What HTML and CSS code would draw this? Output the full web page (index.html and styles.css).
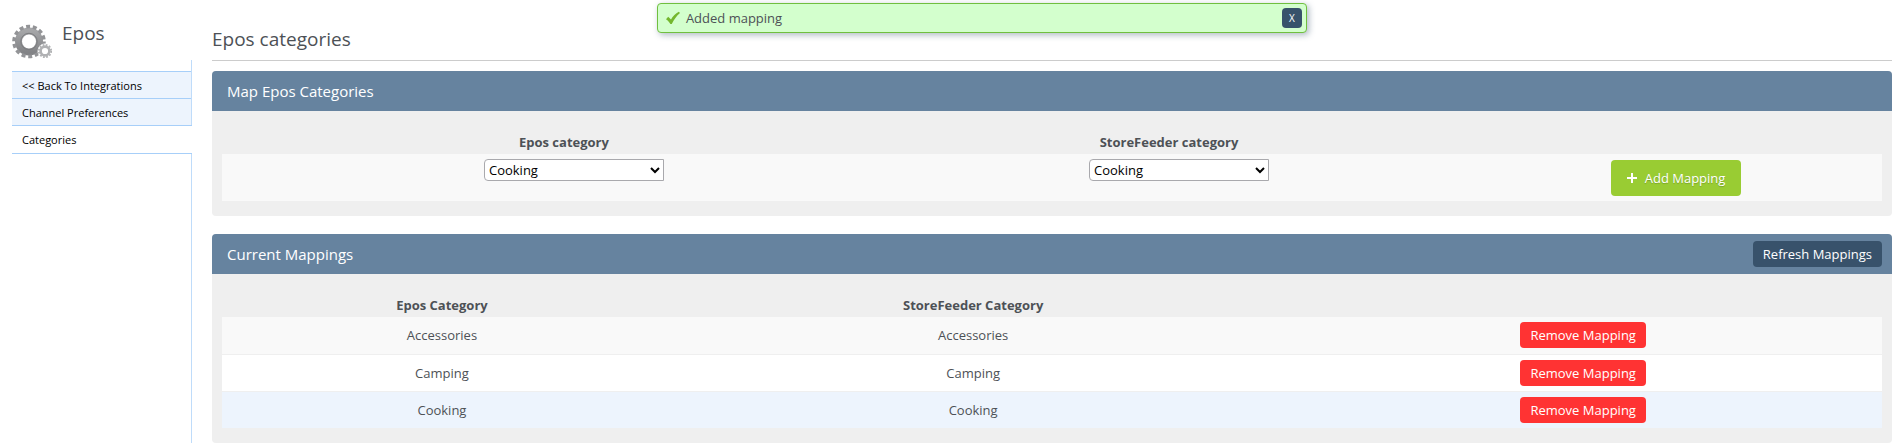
FILE: index.html
```
<!DOCTYPE html>
<html lang="en">
<head>
    <meta charset="UTF-8">
    <meta name="viewport" content="width=device-width, initial-scale=1.0">
    <title>Epos categories</title>
    <link rel="stylesheet" href="styles.css">
</head>
<body>
<div class="notification" role="status">
    <svg class="notification-icon" width="16" height="14" viewBox="0 0 16 14" aria-hidden="true">
        <path d="M1 8.2 3.2 5.8 6 8.4C8 5 10.500 2.600 13.800 .8L15 2C11.500 5 9 8.500 6.800 13H5.400C4.300 11 3 9.500 1 8.200Z" fill="#74b72d"/>
    </svg>
    <span class="notification-text">Added mapping</span>
    <button type="button" class="notification-close">X</button>
</div>

<div class="page">
    <aside class="sidebar">
        <div class="sidebar-title">
            <svg class="gears" width="40" height="36" viewBox="0 0 40 36" aria-hidden="true">
                <defs>
                    <linearGradient id="gear-fill" x1="0" y1="0" x2="0" y2="1">
                        <stop offset="0" stop-color="#a5a6a8"/>
                        <stop offset="1" stop-color="#828386"/>
                    </linearGradient>
                </defs>
                <circle cx="17" cy="17.500" r="10.500" fill="none" stroke="url(#gear-fill)" stroke-width="7"/>
                <circle cx="17" cy="17.500" r="15" fill="none" stroke="#939497" stroke-width="3.600" stroke-dasharray="4 2.732"/>
                <circle cx="17" cy="17.500" r="8.200" fill="none" stroke="#7b7c7f" stroke-width="1"/>
                <circle cx="33" cy="27" r="7.500" fill="#fff"/>
                <circle cx="33" cy="27" r="4.400" fill="none" stroke="#b0b1b3" stroke-width="2.600"/>
                <circle cx="33" cy="27" r="6.200" fill="none" stroke="#b0b1b3" stroke-width="1.800" stroke-dasharray="1.800 1.446"/>
            </svg>
            <h2>Epos</h2>
        </div>
        <nav class="side-nav">
            <a href="#">&lt;&lt; Back To Integrations</a>
            <a href="#">Channel Preferences</a>
            <a href="#" class="active">Categories</a>
        </nav>
    </aside>

    <main class="content">
        <h1>Epos categories</h1>

        <section class="panel">
            <div class="panel-header">
                <h3>Map Epos Categories</h3>
            </div>
            <div class="panel-body">
                <table class="grid map-grid">
                    <thead>
                        <tr>
                            <th class="col-epos"><label for="epos-category">Epos category</label></th>
                            <th class="col-store"><label for="store-category">StoreFeeder category</label></th>
                            <th></th>
                        </tr>
                    </thead>
                    <tbody>
                        <tr>
                            <td>
                                <select id="epos-category">
                                    <option>Accessories</option>
                                    <option>Camping</option>
                                    <option selected>Cooking</option>
                                </select>
                            </td>
                            <td>
                                <select id="store-category">
                                    <option>Accessories</option>
                                    <option>Camping</option>
                                    <option selected>Cooking</option>
                                </select>
                            </td>
                            <td class="action">
                                <button type="button" class="btn btn-add">
                                    <svg width="10" height="10" viewBox="0 0 10 10" aria-hidden="true">
                                        <path d="M4 0h2v4h4v2H6v4H4V6H0V4h4z" fill="#fff"/>
                                    </svg>
                                    Add Mapping
                                </button>
                            </td>
                        </tr>
                    </tbody>
                </table>
            </div>
        </section>

        <section class="panel">
            <div class="panel-header">
                <h3>Current Mappings</h3>
                <button type="button" class="btn btn-refresh">Refresh Mappings</button>
            </div>
            <div class="panel-body">
                <table class="grid current-grid">
                    <thead>
                        <tr>
                            <th class="col-epos">Epos Category</th>
                            <th class="col-store">StoreFeeder Category</th>
                            <th></th>
                        </tr>
                    </thead>
                    <tbody>
                        <tr>
                            <td>Accessories</td>
                            <td>Accessories</td>
                            <td><button type="button" class="btn btn-remove">Remove Mapping</button></td>
                        </tr>
                        <tr>
                            <td>Camping</td>
                            <td>Camping</td>
                            <td><button type="button" class="btn btn-remove">Remove Mapping</button></td>
                        </tr>
                        <tr class="highlight">
                            <td>Cooking</td>
                            <td>Cooking</td>
                            <td><button type="button" class="btn btn-remove">Remove Mapping</button></td>
                        </tr>
                    </tbody>
                </table>
            </div>
        </section>
    </main>
</div>
</body>
</html>
```
FILE: styles.css
```
* {
    box-sizing: border-box;
}

body {
    margin: 0;
    background: #fff;
    color: #4d5156;
    font-family: 'Segoe UI', 'Open Sans', sans-serif;
    font-size: 13px;
    line-height: 18px;
}

h1, h2, h3 {
    margin: 0;
    font-weight: 400;
}

button, select {
    font-family: inherit;
    font-size: 13px;
}

/* Notification bar */
.notification {
    position: absolute;
    top: 3px;
    left: 34.5%;
    width: 650px;
    max-width: 60%;
    height: 30px;
    padding: 0 4px 0 7px;
    display: flex;
    align-items: center;
    gap: 5px;
    background: #d3ffcd;
    border: 1px solid #70bf3f;
    border-radius: 4px;
    box-shadow: 2px 2px 6px rgba(56, 82, 107, 0.4);
}

.notification-text {
    flex: 1;
}

.notification-close {
    width: 20px;
    height: 20px;
    padding: 0;
    border: none;
    border-radius: 4px;
    background: #38526b;
    color: #fff;
    font-size: 10px;
    cursor: pointer;
}

/* Layout */
.page {
    display: flex;
    gap: 20px;
    padding: 0 12px;
}

.sidebar {
    width: 180px;
    flex-shrink: 0;
    display: flex;
    flex-direction: column;
}

.sidebar-title {
    display: flex;
    gap: 10px;
    height: 60px;
    padding-top: 24px;
}

.sidebar-title h2 {
    font-size: 19px;
    line-height: 18px;
}

.side-nav {
    flex: 1;
    padding-top: 11px;
    border-right: 1px solid #bfdcfa;
}

.side-nav a {
    display: block;
    height: 27px;
    padding: 0 10px;
    border-top: 1px solid #a7cff9;
    background: #edf4fd;
    color: #000;
    font-size: 11px;
    line-height: 27px;
    text-decoration: none;
}

.side-nav a.active {
    height: 29px;
    margin-right: -1px;
    border-bottom: 1px solid #a7cff9;
    background: #fff;
}

.content {
    flex: 1;
}

.content h1 {
    padding: 27px 0 9px;
    margin-bottom: 10px;
    border-bottom: 1px solid #ccc;
    font-size: 19px;
    line-height: 24px;
}

/* Panels */
.panel {
    margin-bottom: 18px;
    background: #efefef;
    border-radius: 4px;
    overflow: hidden;
}

.panel:last-child {
    margin-bottom: 0;
}

.panel-header {
    display: flex;
    align-items: center;
    justify-content: space-between;
    height: 40px;
    padding: 0 10px 0 15px;
    background: #66839f;
    color: #fff;
}

.panel-header h3 {
    font-size: 15px;
}

.panel-body {
    padding: 15px 10px;
}

/* Tables */
.grid {
    width: 100%;
    table-layout: fixed;
    border-collapse: collapse;
    text-align: center;
}

.grid th {
    height: 28px;
    padding: 7px 0 3px;
    font-weight: 700;
}

.grid td {
    padding: 5px 0;
    background: #f9f9f9;
}

.map-grid .col-epos {
    width: 41.2%;
}

.map-grid .col-store {
    width: 31.7%;
}

.map-grid td {
    height: 47px;
    padding-left: 20px;
    vertical-align: top;
}

.map-grid td.action {
    padding-left: 38px;
}

.map-grid select {
    display: block;
    width: 180px;
    height: 22px;
    margin: 0 auto;
    padding: 0;
    border: 1px solid #a9a9ad;
    border-radius: 4px 0 0 4px;
    background: #fff;
    color: #000;
}

.current-grid .col-epos {
    width: 26.5%;
}

.current-grid .col-store {
    width: 37.5%;
}

.current-grid td {
    height: 37px;
    border-bottom: 1px solid #efefef;
}

.current-grid tr:nth-child(even) td {
    background: #fff;
}

.current-grid tr.highlight td {
    border-bottom: none;
    background: #edf4fd;
}

/* Buttons */
.btn {
    height: 26px;
    padding: 0 10px;
    border: none;
    border-radius: 4px;
    color: #fff;
    cursor: pointer;
}

.btn-refresh {
    background: #38526b;
}

.btn-remove {
    display: block;
    margin: 0 auto;
    background: #f33;
}

.btn-add {
    display: flex;
    align-items: center;
    gap: 8px;
    height: 36px;
    margin: 1px auto 0;
    padding: 0 16px;
    background: #9c3;
    text-shadow: 0 1px 1px rgba(0, 0, 0, 0.2);
}
```
